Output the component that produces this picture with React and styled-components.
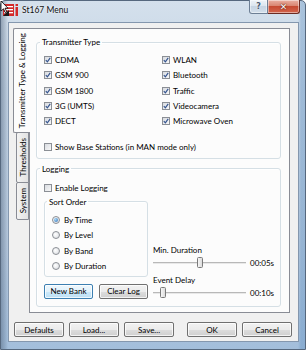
import React from 'react';
import styled, { createGlobalStyle } from 'styled-components';

const GlobalStyle = createGlobalStyle`
  html, body { margin: 0; padding: 0; background: #fff; }
  body {
    font-family: Lato, "Liberation Sans", sans-serif;
    font-size: 8px;
    color: #000;
  }
  * { box-sizing: border-box; }
`;

const Window = styled.div`
  position: relative;
  width: 306px;
  height: 350px;
  display: flex;
  flex-direction: column;
  border: 1px solid #56687e;
  border-radius: 5px 5px 0 0;
  background:
    linear-gradient(to right, rgba(70, 90, 115, 0.45) 0, rgba(70, 90, 115, 0.15) 5px, transparent 7px, transparent 297px, rgba(90, 140, 190, 0.35) 300px),
    linear-gradient(to bottom, #d4e0ec 0%, #c3d3e4 25%, #b6c9de 70%, #a3bedb 100%);
`;

const TitleBar = styled.div`
  height: 21px;
  display: flex;
  align-items: center;
  padding: 0 5px 3px 2px;
`;

const AppIcon = styled.svg`
  width: 16px;
  height: 14px;
  flex: none;
`;

const Title = styled.span`
  margin-left: 3px;
  font-size: 8.5px;
  color: #111;
  text-shadow: 0 0 3px #fff;
  flex: 1;
`;

const Caption = styled.div`
  align-self: flex-start;
  display: flex;
  margin-top: -1px;
`;

const CapBtn = styled.div`
  height: 14px;
  width: ${p => (p.$close ? 32 : 19)}px;
  display: flex;
  align-items: center;
  justify-content: center;
  border: 1px solid ${p => (p.$close ? '#6b2b23' : '#6d7f95')};
  border-top: none;
  border-left: ${p => (p.$close ? 'none' : '1px solid #6d7f95')};
  border-radius: ${p => (p.$close ? '0 0 3px 0' : '0 0 0 3px')};
  background: ${p =>
    p.$close
      ? 'linear-gradient(#eab0a3 0%, #d98571 45%, #c64a32 50%, #d3654d 100%)'
      : 'linear-gradient(#eef3f8 0%, #dbe5ef 45%, #c6d4e3 50%, #d3dfeb 100%)'};
  box-shadow: inset 0 0 0 1px rgba(255, 255, 255, 0.45);
  color: ${p => (p.$close ? '#fff' : '#4a5c72')};
  font-family: "DejaVu Sans", sans-serif;
  font-weight: bold;
  font-size: ${p => (p.$close ? 9 : 8)}px;
  text-shadow: ${p => (p.$close ? '0 0 2px #5a1a10, 0 0 1px #5a1a10' : '0 0 2px #fff')};
`;

const Cursor = styled.svg`
  position: absolute;
  left: -1px;
  top: -1px;
  width: 9px;
  height: 14px;
`;

const Client = styled.div`
  flex: 1;
  margin: 0 6px 7px 7px;
  background: #f0f0f0;
  border: 1px solid #8497ae;
  display: flex;
  flex-direction: column;
  padding: 5px 8px 4px 4px;
`;

const Body = styled.div`
  flex: 1;
  display: flex;
`;

const TabStrip = styled.div`
  width: 16px;
  flex: none;
  display: flex;
  flex-direction: column;
  align-items: flex-end;
`;

const Tab = styled.div`
  position: relative;
  z-index: ${p => (p.$active ? 1 : 0)};
  width: ${p => (p.$active ? 17 : 13)}px;
  height: ${p => p.$h}px;
  margin-right: ${p => (p.$active ? -1 : 0)}px;
  margin-top: ${p => (p.$first ? 0 : -1)}px;
  border: 1px solid #898c95;
  border-right: ${p => (p.$active ? 'none' : '1px solid #898c95')};
  border-radius: 2px 0 0 2px;
  background: ${p => (p.$active ? '#fcfcfc' : 'linear-gradient(to right, #f3f3f3, #e2e2e2)')};
  display: flex;
  align-items: center;
  justify-content: center;
`;

const TabText = styled.span`
  writing-mode: vertical-rl;
  transform: rotate(180deg);
  white-space: nowrap;
  line-height: 10px;
`;

const Panel = styled.div`
  flex: 1;
  border: 1px solid #898c95;
  background: #fcfcfc;
  padding: 8px 8px 5px 6px;
  display: flex;
  flex-direction: column;
`;

const Group = styled.fieldset`
  margin: ${p => p.$mt || 0}px 0 0 0;
  padding: 0;
  min-width: 0;
  border: 1px solid #d5dfe5;
  border-radius: 3px;
  box-shadow: inset 1px 1px 0 #fff;
`;

const Legend = styled.legend`
  margin-left: ${p => p.$ml}px;
  padding: 0 2px;
  height: 10px;
  line-height: 10px;
`;

const CheckGrid = styled.div`
  display: grid;
  grid-template-columns: 118px 1fr;
  grid-auto-rows: 15.25px;
  padding: 5.5px 0 0 7px;
`;

const Row = styled.label`
  display: flex;
  align-items: center;
  gap: 3px;
  height: 15.25px;
  white-space: nowrap;
`;

const BaseRow = styled(Row)`
  margin: 10.6px 0 3.4px 7px;
`;

const Box = styled.span`
  width: 8px;
  height: 8px;
  flex: none;
  border: 1px solid #8b8f95;
  background: linear-gradient(135deg, #d8dbe0, #f8f8f8);
  display: flex;
  align-items: center;
  justify-content: center;
`;

const RadioDot = styled.span`
  width: 8px;
  height: 8px;
  flex: none;
  border-radius: 50%;
  border: 1px solid #8b8f95;
  background: radial-gradient(circle at 40% 40%, #fff, #d6d9de);
  display: flex;
  align-items: center;
  justify-content: center;
  &::after {
    content: '';
    display: ${p => (p.$on ? 'block' : 'none')};
    width: 4px;
    height: 4px;
    border-radius: 50%;
    background: radial-gradient(circle at 35% 35%, #a8d8f8, #2d6db5);
  }
`;

const RadioRow = styled(Row)`
  gap: 4px;
`;

const LogBody = styled.div`
  padding: 6.5px 0 7px 7px;
`;

const SortGroup = styled(Group)`
  margin-top: 1.25px;
`;

const RadioList = styled.div`
  padding: 5.5px 0 2.5px 7px;
`;

const LogGrid = styled.div`
  display: grid;
  grid-template-columns: 104px 1fr;
  column-gap: 5px;
`;

const LeftCol = styled.div`
  display: flex;
  flex-direction: column;
`;

const BtnRow = styled.div`
  display: flex;
  gap: ${p => p.$gap || 5}px;
  margin-top: ${p => p.$mt || 0}px;
`;

const Button = styled.button`
  width: ${p => p.$w || 50}px;
  height: 15px;
  padding: 0;
  font: inherit;
  color: #000;
  border: 1px solid ${p => (p.$focus ? '#3c7fb1' : '#707070')};
  border-radius: 2px;
  background: ${p =>
    p.$focus
      ? 'linear-gradient(#eef7fd 0%, #e0f1fb 50%, #cbe8f9 51%, #bde0f5 100%)'
      : 'linear-gradient(#f2f2f2 0%, #ebebeb 50%, #dddddd 51%, #cfcfcf 100%)'};
  box-shadow: inset 0 0 0 1px rgba(255, 255, 255, 0.75);
`;

const RightCol = styled.div`
  align-self: end;
  display: flex;
  flex-direction: column;
`;

const SliderLabel = styled.div`
  height: 10px;
  line-height: 10px;
  margin-top: ${p => p.$mt || 0}px;
`;

const SliderRow = styled.div`
  height: 12px;
  margin-top: 2px;
  display: flex;
  align-items: center;
  gap: 4px;
`;

const Track = styled.div`
  position: relative;
  width: 93px;
  height: 2px;
  background: linear-gradient(#b8b8b8 50%, #e8e8e8 50%);
`;

const Thumb = styled.div`
  position: absolute;
  top: -5px;
  width: 6px;
  height: 11px;
  transform: translateX(-50%);
  border: 1px solid #7a7a7a;
  border-radius: 1.5px;
  background: linear-gradient(to right, #f6f6f6, #dcdcdc);
`;

const Footer = styled.div`
  height: 15px;
  margin: 9px -2px 0 1px;
  display: flex;
  justify-content: space-between;
`;

const Check = ({ on }) => (
  <Box>
    {on && (
      <svg width="6" height="6" viewBox="0 0 6 6">
        <path d="M0.8 3.2 L2.4 4.9 L5.2 0.9" fill="none" stroke="#35558f" strokeWidth="1.2" />
      </svg>
    )}
  </Box>
);

const CheckItem = ({ label, on }) => (
  <Row>
    <Check on={on} />
    {label}
  </Row>
);

const Slider = ({ value, text }) => (
  <SliderRow>
    <Track>
      <Thumb style={{ left: `${value}%` }} />
    </Track>
    <span>{text}</span>
  </SliderRow>
);

const left = ['CDMA', 'GSM 900', 'GSM 1800', '3G (UMTS)', 'DECT'];
const right = ['WLAN', 'Bluetooth', 'Traffic', 'Videocamera', 'Microwave Oven'];
const sorts = ['By Time', 'By Level', 'By Band', 'By Duration'];

export default function App() {
  const types = left.flatMap((l, i) => [l, right[i]]);
  return (
    <>
      <GlobalStyle />
      <Window>
        <TitleBar>
          <AppIcon viewBox="0 0 16 14">
            <rect x="0" y="1" width="11" height="12" fill="#d42a2a" />
            <rect x="1" y="3" width="9" height="1.3" fill="#fff" />
            <rect x="1" y="6" width="9" height="1.3" fill="#fff" />
            <rect x="1" y="9" width="9" height="1.3" fill="#fff" />
            <path d="M0 13 L6 7 L6 13 Z" fill="#1a1a1a" />
            <rect x="12.5" y="4" width="2.5" height="9" fill="#d42a2a" />
            <rect x="12.5" y="1" width="2.5" height="2" fill="#d42a2a" />
          </AppIcon>
          <Title>St167 Menu</Title>
          <Caption>
            <CapBtn>?</CapBtn>
            <CapBtn $close>✕</CapBtn>
          </Caption>
        </TitleBar>
        <Cursor viewBox="0 0 9 14">
          <path d="M1 1 L1 11 L3.5 8.8 L5.3 12.6 L6.8 11.9 L5 8.2 L8 8.2 Z" fill="#fff" stroke="#000" strokeWidth="0.8" />
        </Cursor>
        <Client>
          <Body>
            <TabStrip>
              <Tab $active $first $h={105}>
                <TabText>Transmitter Type &amp; Logging</TabText>
              </Tab>
              <Tab $h={51}>
                <TabText>Thresholds</TabText>
              </Tab>
              <Tab $h={38}>
                <TabText>System</TabText>
              </Tab>
            </TabStrip>
            <Panel>
              <Group>
                <Legend $ml={3}>Transmitter Type</Legend>
                <CheckGrid>
                  {types.map(t => (
                    <CheckItem key={t} label={t} on />
                  ))}
                </CheckGrid>
                <BaseRow>
                  <Check />
                  Show Base Stations (in MAN mode only)
                </BaseRow>
              </Group>
              <Group $mt={5}>
                <Legend $ml={3}>Logging</Legend>
                <LogBody>
                  <CheckItem label="Enable Logging" />
                  <LogGrid>
                    <LeftCol>
                      <SortGroup>
                        <Legend $ml={2}>Sort Order</Legend>
                        <RadioList>
                          {sorts.map((s, i) => (
                            <RadioRow key={s}>
                              <RadioDot $on={i === 0} />
                              {s}
                            </RadioRow>
                          ))}
                        </RadioList>
                      </SortGroup>
                      <BtnRow $mt={7} $gap={6}>
                        <Button $w={49} $focus>New Bank</Button>
                        <Button $w={49}>Clear Log</Button>
                      </BtnRow>
                    </LeftCol>
                    <RightCol>
                      <SliderLabel>Min. Duration</SliderLabel>
                      <Slider value={50} text="00:05s" />
                      <SliderLabel $mt={6}>Event Delay</SliderLabel>
                      <Slider value={11} text="00:10s" />
                    </RightCol>
                  </LogGrid>
                </LogBody>
              </Group>
            </Panel>
          </Body>
          <Footer>
            <BtnRow>
              <Button>Defaults</Button>
              <Button>Load...</Button>
              <Button>Save...</Button>
            </BtnRow>
            <BtnRow>
              <Button>OK</Button>
              <Button>Cancel</Button>
            </BtnRow>
          </Footer>
        </Client>
      </Window>
    </>
  );
}
